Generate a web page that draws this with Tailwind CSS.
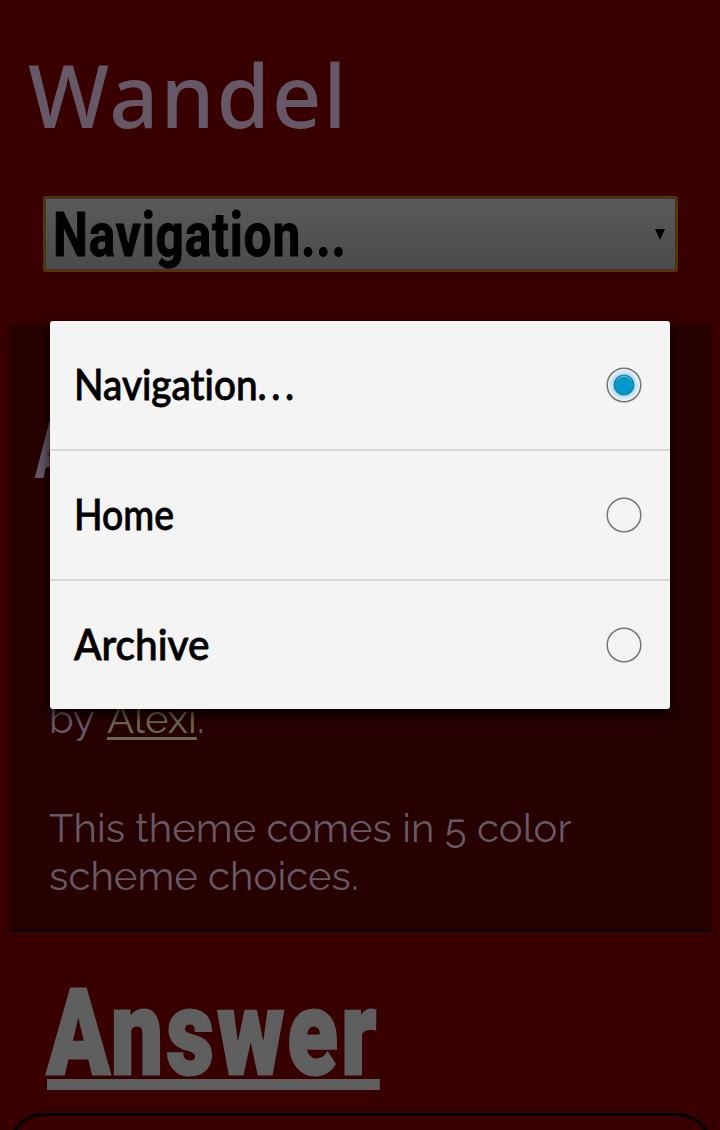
<!DOCTYPE html>
<html lang="en">
<head>
<meta charset="utf-8">
<title>Wandel</title>
<script src="https://cdn.jsdelivr.net/npm/@tailwindcss/browser@4"></script>
</head>
<body class="relative flex h-[1130px] w-[720px] flex-col overflow-hidden bg-[#380000] text-[#665867]">
  <header class="flex h-[324px] shrink-0 flex-col pt-[51px]">
    <h1 class="ml-[28px] h-[87px] w-max origin-left scale-x-[0.99] font-['Noto_Sans',sans-serif] text-[87px] leading-[87px] font-medium tracking-[2px]">Wandel</h1>
    <div class="mt-[58px] ml-[43px] flex h-[76px] w-[635px] items-center justify-between rounded-[3px] border-2 border-[#593600] bg-linear-to-b from-[#5a5a5a] to-[#4b4b4b] pr-[11px] pl-2 text-black inset-ring inset-ring-[#383532]">
      <span class="w-0 origin-left scale-x-[0.8] pt-0.5 font-[Roboto,sans-serif] text-[62px] leading-[70px] font-bold tracking-[1px] whitespace-nowrap [-webkit-text-stroke:1px_black]">Navigation...</span>
      <svg class="h-[11px] w-[10px]" viewBox="0 0 10 11"><path d="M0 0H10L5 11Z" fill="black"/></svg>
    </div>
  </header>

  <main class="ml-[9px] flex h-[608px] w-[703px] shrink-0 flex-col border-b-2 border-[#080808] bg-[#270000]">
    <h2 class="mt-[86px] ml-[27px] h-[81px] w-max origin-left scale-x-[0.6] -skew-x-[4deg] font-[Roboto,sans-serif] text-[81px] leading-[81px] font-black">A</h2>
    <div class="mt-[204px] ml-[40px] flex flex-col gap-[61px] font-[Raleway,Lato,sans-serif] text-[40px] leading-[48px] font-normal tracking-[0.08px]">
      <p class="w-max">by <a class="ml-[3px] text-[#6a6a4d] underline decoration-[3px] underline-offset-[4px]">Alexi</a>.</p>
      <p class="w-max">This theme comes in 5 color<br>scheme choices.</p>
    </div>
  </main>

  <h2 class="mt-[41px] ml-[47px] h-[117px] w-max origin-left scale-x-[0.774] border-b-[11px] border-[#5f5f5f] pt-px font-[Roboto,sans-serif] text-[119px] leading-[119px] font-black tracking-[4.500px] text-[#5f5f5f] [-webkit-text-stroke:3px_#5f5f5f]">Answer</h2>
  <svg class="mt-[23px] ml-[8px] h-[17px] w-[705px]" viewBox="0 0 705 17"><path d="M6.500 18A34 34 0 0 1 35 1.5H670A34 34 0 0 1 698.500 18" fill="none" stroke="black" stroke-width="3"/></svg>

  <div class="absolute top-[321px] left-[50px] flex h-[388px] w-[620px] flex-col rounded-[3px] bg-[#f4f4f4] font-[Lato,sans-serif] text-[42px] leading-[50px] font-medium text-black shadow-[0_5px_12px_1px_rgba(0,0,0,0.75)]">
    <div class="flex h-[130px] items-center justify-between border-b-2 border-[#d9d9d9] pr-7 pb-0.5 pl-6">
      <span class="w-max origin-left scale-x-[0.92] [font-variant-ligatures:none] [-webkit-text-stroke:0.8px_black]">Navigation<span class="tracking-[5px]">...</span></span>
      <svg class="mt-0.5 size-9" viewBox="0 0 36 36">
        <defs><radialGradient id="glow"><stop offset="0.55" stop-color="#9ad5ec"/><stop offset="0.9" stop-color="#e9f2f5"/></radialGradient></defs>
        <circle cx="18" cy="18" r="16.8" fill="url(#glow)" stroke="#777" stroke-width="1.5"/>
        <circle cx="18" cy="18" r="9.8" fill="#0099cc" stroke="#287e9d" stroke-width="1.3"/>
        <path d="M10.500 13.500A9 9 0 0 1 25.500 13.500" fill="none" stroke="#65b9d6" stroke-width="1"/>
      </svg>
    </div>
    <div class="flex h-[130px] items-center justify-between border-b-2 border-[#d9d9d9] pr-7 pb-0.5 pl-6">
      <span class="w-max origin-left scale-x-[0.89] [-webkit-text-stroke:0.8px_black]">Home</span>
      <svg class="mt-0.5 size-9" viewBox="0 0 36 36"><circle cx="18" cy="18" r="16.8" fill="none" stroke="#777" stroke-width="1.5"/></svg>
    </div>
    <div class="flex h-[128px] items-center justify-between pr-7 pb-0.5 pl-6">
      <span class="w-max origin-left scale-x-[0.965] [-webkit-text-stroke:0.8px_black]">Archive</span>
      <svg class="mt-0.5 size-9" viewBox="0 0 36 36"><circle cx="18" cy="18" r="16.8" fill="none" stroke="#777" stroke-width="1.5"/></svg>
    </div>
  </div>
</body>
</html>
